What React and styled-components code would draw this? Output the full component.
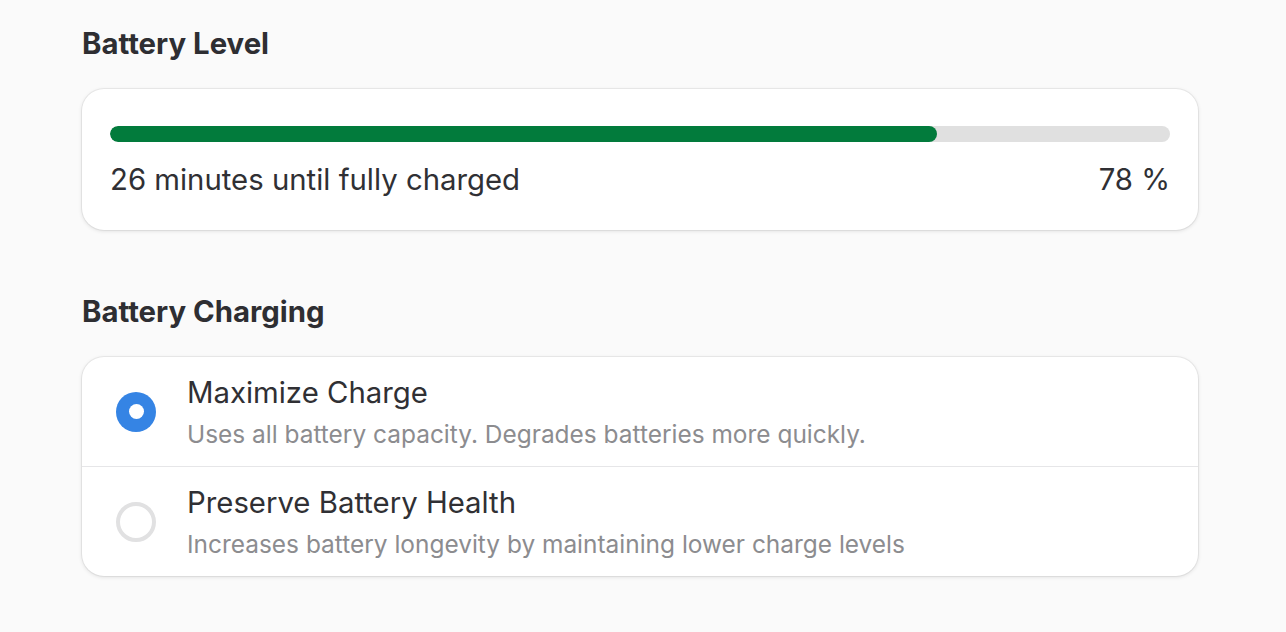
import React, { useState } from "react";
import styled, { createGlobalStyle } from "styled-components";

const GlobalStyle = createGlobalStyle`
  html, body {
    margin: 0;
    padding: 0;
    background: #fafafa;
    font-family: Inter, "Noto Sans", sans-serif;
    color: #303034;
  }
`;

const Page = styled.div`
  min-height: 632px;
  padding: 26px 0 0 82px;
  box-sizing: border-box;
`;

const Column = styled.div`
  width: 1116px;
  display: flex;
  flex-direction: column;
`;

const Heading = styled.h2`
  margin: ${(p) => (p.first ? "0" : "64px")} 0 27px 0;
  font-size: 29.33px;
  line-height: 36px;
  font-weight: 700;
  color: #2e2e32;
`;

const Card = styled.div`
  background: #ffffff;
  border-radius: 22px;
  box-shadow: 0 0 0 1px rgba(0, 0, 0, 0.05), 0 1px 4px rgba(0, 0, 0, 0.12);
  overflow: hidden;
`;

const LevelBody = styled.div`
  padding: 37px 28px 32px 28px;
  display: flex;
  flex-direction: column;
  gap: 20px;
`;

const Track = styled.div`
  height: 16px;
  border-radius: 8px;
  background: #e0e0e0;
  overflow: hidden;
`;

const Fill = styled.div`
  height: 100%;
  border-radius: 8px;
  background: #027b3c;
`;

const LevelInfo = styled.div`
  display: flex;
  justify-content: space-between;
  font-size: 29.33px;
  line-height: 36px;
  color: #303034;
`;

const Row = styled.label`
  display: flex;
  align-items: center;
  gap: 31px;
  height: 109px;
  padding: 0 34px;
  border-top: ${(p) => (p.divided ? "1px solid #e6e6e8" : "none")};
  cursor: pointer;
`;

const Radio = styled.span`
  width: 40px;
  height: 40px;
  border-radius: 50%;
  box-sizing: border-box;
  flex-shrink: 0;
  display: flex;
  align-items: center;
  justify-content: center;
  background: ${(p) => (p.checked ? "#3584e4" : "transparent")};
  border: ${(p) => (p.checked ? "none" : "4px solid #e1e1e2")};
  &::after {
    content: "";
    display: ${(p) => (p.checked ? "block" : "none")};
    width: 15px;
    height: 15px;
    border-radius: 50%;
    background: #ffffff;
  }
`;

const RowText = styled.div`
  display: flex;
  flex-direction: column;
  gap: 8px;
`;

const Title = styled.div`
  font-size: 29.33px;
  line-height: 36px;
  color: #303034;
`;

const Subtitle = styled.div`
  font-size: 24.44px;
  line-height: 30px;
  color: #8c8c8f;
`;

const options = [
  {
    id: "max",
    title: "Maximize Charge",
    sub: "Uses all battery capacity. Degrades batteries more quickly.",
  },
  {
    id: "preserve",
    title: "Preserve Battery Health",
    sub: "Increases battery longevity by maintaining lower charge levels",
  },
];

export default function App() {
  const [mode, setMode] = useState("max");
  const level = 78;

  return (
    <Page>
      <GlobalStyle />
      <Column>
        <Heading first>Battery Level</Heading>
        <Card>
          <LevelBody>
            <Track>
              <Fill style={{ width: `${level}%` }} />
            </Track>
            <LevelInfo>
              <span>26 minutes until fully charged</span>
              <span>{level} %</span>
            </LevelInfo>
          </LevelBody>
        </Card>

        <Heading>Battery Charging</Heading>
        <Card>
          {options.map((o, i) => (
            <Row key={o.id} divided={i > 0} onClick={() => setMode(o.id)}>
              <Radio checked={mode === o.id} />
              <RowText>
                <Title>{o.title}</Title>
                <Subtitle>{o.sub}</Subtitle>
              </RowText>
            </Row>
          ))}
        </Card>
      </Column>
    </Page>
  );
}
